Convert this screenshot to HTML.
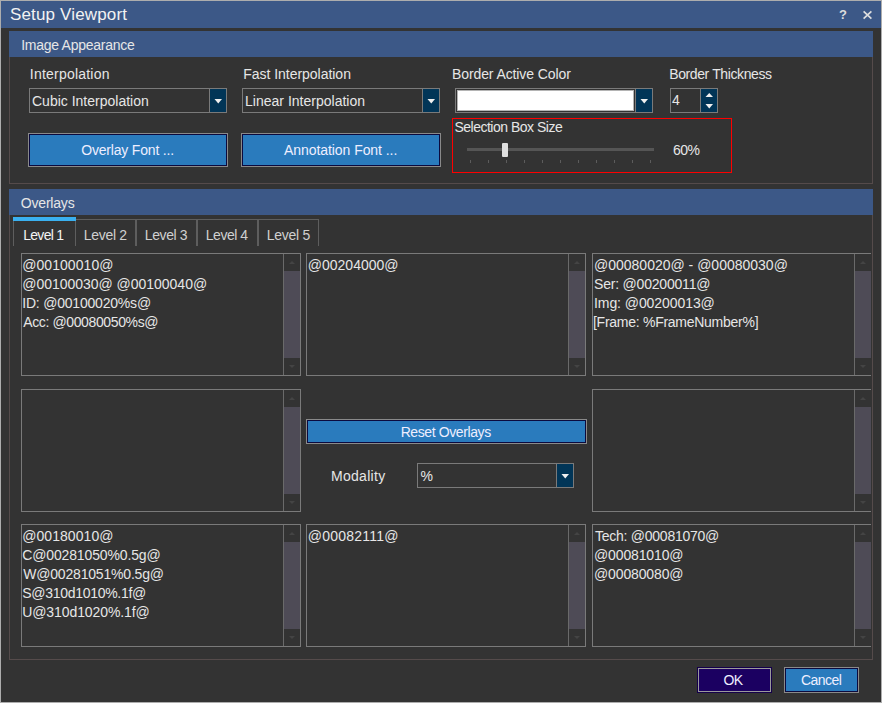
<!DOCTYPE html>
<html><head><meta charset="utf-8">
<style>
*{box-sizing:border-box;margin:0;padding:0}
html,body{width:882px;height:703px;overflow:hidden;background:#333333}
body{position:relative;font-family:"Liberation Sans",sans-serif;font-size:14px;color:#e6e6e6}
.a{position:absolute}
.t{position:absolute;white-space:pre;line-height:19px}
.win{left:0;top:0;width:882px;height:703px;border:1px solid #adadad;background:#333}
.title{left:1px;top:1px;width:880px;height:27px;background:#3c5887}
.hdr{background:#3c5887}
.grp{border:1px solid #554b4b;border-top:none}
.cb{border:1px solid #7a7a7a;background:#333}
.dd{background:#013557;border-left:1px solid #7a7a7a}
.btn{border:1px solid #8a8a8a;background:#0b0a3e}
.btn i{position:absolute;left:1px;top:1px;right:1px;bottom:1px;background:#2a7bbd}
.tb{border:1px solid #7a7a7a;background:#333}
.sb{border-left:1px solid #6a6a6a}
.thumb{background:#4e4b56}
.up{width:0;height:0;border-left:3px solid transparent;border-right:3px solid transparent;border-bottom:3px solid #444444}
.dn{width:0;height:0;border-left:3px solid transparent;border-right:3px solid transparent;border-top:3px solid #444444}
.wup{width:0;height:0;border-left:3.5px solid transparent;border-right:3.5px solid transparent;border-bottom:4px solid #f0f0f0}
.wdn{width:0;height:0;border-left:3.5px solid transparent;border-right:3.5px solid transparent;border-top:4px solid #f0f0f0}
.tab{border:1px solid #5e5e5e;border-bottom:none}
.tick{width:1px;height:3px;background:#5c5c5c}
</style></head><body>
<div class="a win"></div>
<div class="a title"></div>
<div id="t0" class="t" style="left:10.0px;top:5px;font-size:17px;line-height:20px;color:#f2f2f2;letter-spacing:0.154px">Setup Viewport</div>
<div id="t1" class="t" style="left:839px;top:5px;font-size:13px;font-weight:bold;line-height:20px;color:#dcdcdc">?</div>
<svg class="a" style="left:860px;top:8px" width="16" height="14"><path d="M3.6 3.4 L11.4 10.6 M11.4 3.4 L3.6 10.6" stroke="#dedede" stroke-width="1.7" fill="none"/></svg>
<div class="a hdr" style="left:9px;top:31px;width:864px;height:26px"></div>
<div id="t3" class="t" style="left:21.2px;top:36px;;letter-spacing:-0.266px">Image Appearance</div>
<div class="a grp" style="left:9px;top:57px;width:864px;height:127px"></div>
<div id="t4" class="t" style="left:29.8px;top:65px;;letter-spacing:0.218px">Interpolation</div>
<div id="t5" class="t" style="left:243.2px;top:65px;;letter-spacing:-0.026px">Fast Interpolation</div>
<div id="t6" class="t" style="left:452.0px;top:65px;;letter-spacing:-0.101px">Border Active Color</div>
<div id="t7" class="t" style="left:669.2px;top:65px;;letter-spacing:-0.387px">Border Thickness</div>
<div class="a cb" style="left:29px;top:88px;width:198px;height:25px"></div>
<div class="a dd" style="left:209px;top:89px;width:17px;height:23px"></div>
<svg class="a" style="left:214px;top:99px" width="9" height="5"><polygon points="0.5,0 8,0 4.25,4.5" fill="#f0f0f0"/></svg>
<div id="t8" class="t" style="left:32.0px;top:92px;">Cubic Interpolation</div>
<div class="a cb" style="left:242px;top:88px;width:198px;height:25px"></div>
<div class="a dd" style="left:422px;top:89px;width:17px;height:23px"></div>
<svg class="a" style="left:427px;top:99px" width="9" height="5"><polygon points="0.5,0 8,0 4.25,4.5" fill="#f0f0f0"/></svg>
<div id="t9" class="t" style="left:245.0px;top:92px;;letter-spacing:0.010px">Linear Interpolation</div>
<div class="a cb" style="left:455px;top:88px;width:198px;height:25px"></div>
<div class="a dd" style="left:635px;top:89px;width:17px;height:23px"></div>
<svg class="a" style="left:640px;top:99px" width="9" height="5"><polygon points="0.5,0 8,0 4.25,4.5" fill="#f0f0f0"/></svg>
<div class="a" style="left:457px;top:90px;width:177px;height:21px;background:#fff;border:1px solid #b4b4b4"></div>
<div class="a cb" style="left:670px;top:88px;width:48px;height:25px"></div>
<div class="a dd" style="left:700px;top:89px;width:17px;height:23px"></div>
<svg class="a" style="left:705px;top:93px" width="9" height="5"><polygon points="0.5,4 8,4 4.25,0" fill="#f0f0f0"/></svg>
<svg class="a" style="left:705px;top:104px" width="9" height="5"><polygon points="0.5,0 8,0 4.25,4.5" fill="#f0f0f0"/></svg>
<div id="t10" class="t" style="left:672px;top:91px;">4</div>
<div class="a btn" style="left:28px;top:133px;width:200px;height:34px"><i></i></div>
<div id="t11" class="t" style="left:27.6px;top:141px;width:200px;text-align:center;color:#eeeeff;letter-spacing:-0.188px">Overlay Font ...</div>
<div class="a btn" style="left:241px;top:133px;width:200px;height:34px"><i></i></div>
<div id="t12" class="t" style="left:240.6px;top:141px;width:200px;text-align:center;color:#eeeeff;letter-spacing:-0.056px">Annotation Font ...</div>
<div class="a" style="left:452px;top:118px;width:280px;height:55px;border:1px solid #ff0000"></div>
<div id="t13" class="t" style="left:454.4px;top:118px;;letter-spacing:-0.496px">Selection Box Size</div>
<div class="a" style="left:467px;top:148px;width:187px;height:3px;background:#555"></div>
<div class="a tick" style="left:470px;top:160px"></div>
<div class="a tick" style="left:488px;top:160px"></div>
<div class="a tick" style="left:506px;top:160px"></div>
<div class="a tick" style="left:524px;top:160px"></div>
<div class="a tick" style="left:542px;top:160px"></div>
<div class="a tick" style="left:560px;top:160px"></div>
<div class="a tick" style="left:578px;top:160px"></div>
<div class="a tick" style="left:596px;top:160px"></div>
<div class="a tick" style="left:614px;top:160px"></div>
<div class="a tick" style="left:632px;top:160px"></div>
<div class="a tick" style="left:650px;top:160px"></div>
<div class="a" style="left:502px;top:143px;width:6px;height:14px;background:#dedede;border-radius:1px"></div>
<div id="t14" class="t" style="left:673.0px;top:141px;;letter-spacing:-0.500px">60%</div>
<div class="a hdr" style="left:9px;top:189px;width:864px;height:26px"></div>
<div id="t15" class="t" style="left:20.8px;top:194px;;letter-spacing:-0.199px">Overlays</div>
<div class="a grp" style="left:9px;top:215px;width:864px;height:445px"></div>
<div class="a tab" style="left:13px;top:219px;width:63px;height:27px;border-top:none"></div>
<div class="a" style="left:13px;top:217px;width:63px;height:4px;background:#3ab0ef"></div>
<div class="a tab" style="left:76px;top:219px;width:60px;height:27px;border-left:none"></div>
<div class="a tab" style="left:136px;top:219px;width:61px;height:27px"></div>
<div class="a tab" style="left:197px;top:219px;width:61px;height:27px"></div>
<div class="a tab" style="left:258px;top:219px;width:61px;height:27px"></div>
<div id="t16" class="t" style="left:23.2px;top:226px;color:#f4f4f4;letter-spacing:-0.699px">Level 1</div>
<div id="t17" class="t" style="left:83.8px;top:226px;color:#d0d0d0;letter-spacing:-0.299px">Level 2</div>
<div id="t18" class="t" style="left:144.8px;top:226px;color:#d0d0d0;letter-spacing:-0.400px">Level 3</div>
<div id="t19" class="t" style="left:205.8px;top:226px;color:#d0d0d0;letter-spacing:-0.466px">Level 4</div>
<div id="t20" class="t" style="left:266.8px;top:226px;color:#d0d0d0;letter-spacing:-0.266px">Level 5</div>
<div class="a tb" style="left:21px;top:253px;width:280px;height:123px">
<div class="a sb" style="left:261px;top:0;width:17px;height:121px">
<div class="a up" style="left:5px;top:7px"></div>
<div class="a thumb" style="left:0;top:17px;width:16px;height:87px"></div>
<div class="a dn" style="left:5px;top:111px"></div>
</div>
</div>
<div id="t21" class="t" style="left:22.2px;top:256px;;letter-spacing:0.066px">@00100010@</div>
<div id="t22" class="t" style="left:22.2px;top:275px;;letter-spacing:-0.020px">@00100030@ @00100040@</div>
<div id="t23" class="t" style="left:22.2px;top:294px;;letter-spacing:-0.200px">ID: @00100020%s@</div>
<div id="t24" class="t" style="left:23.2px;top:313px;;letter-spacing:-0.375px">Acc: @00080050%s@</div>
<div class="a tb" style="left:306px;top:253px;width:280px;height:123px">
<div class="a sb" style="left:261px;top:0;width:17px;height:121px">
<div class="a up" style="left:5px;top:7px"></div>
<div class="a thumb" style="left:0;top:17px;width:16px;height:87px"></div>
<div class="a dn" style="left:5px;top:111px"></div>
</div>
</div>
<div id="t25" class="t" style="left:307.8px;top:256px;">@00204000@</div>
<div class="a" style="left:10px;top:253px;width:861px;height:123px;overflow:hidden">
<div class="a tb" style="left:582px;top:0px;width:280px;height:123px">
<div class="a sb" style="left:261px;top:0;width:17px;height:121px">
<div class="a up" style="left:5px;top:7px"></div>
<div class="a thumb" style="left:0;top:17px;width:16px;height:87px"></div>
<div class="a dn" style="left:5px;top:111px"></div>
</div>
</div>
</div>
<div id="t26" class="t" style="left:594.0px;top:256px;">@00080020@ - @00080030@</div>
<div id="t27" class="t" style="left:594.0px;top:275px;;letter-spacing:-0.201px">Ser: @00200011@</div>
<div id="t28" class="t" style="left:594.0px;top:294px;;letter-spacing:-0.071px">Img: @00200013@</div>
<div id="t29" class="t" style="left:593.0px;top:313px;;letter-spacing:-0.268px">[Frame: %FrameNumber%]</div>
<div class="a tb" style="left:21px;top:389px;width:280px;height:123px">
<div class="a sb" style="left:261px;top:0;width:17px;height:121px">
<div class="a up" style="left:5px;top:7px"></div>
<div class="a thumb" style="left:0;top:17px;width:16px;height:87px"></div>
<div class="a dn" style="left:5px;top:111px"></div>
</div>
</div>
<div class="a" style="left:10px;top:389px;width:861px;height:123px;overflow:hidden">
<div class="a tb" style="left:582px;top:0px;width:280px;height:123px">
<div class="a sb" style="left:261px;top:0;width:17px;height:121px">
<div class="a up" style="left:5px;top:7px"></div>
<div class="a thumb" style="left:0;top:17px;width:16px;height:87px"></div>
<div class="a dn" style="left:5px;top:111px"></div>
</div>
</div>
</div>
<div class="a tb" style="left:21px;top:524px;width:280px;height:123px">
<div class="a sb" style="left:261px;top:0;width:17px;height:121px">
<div class="a up" style="left:5px;top:7px"></div>
<div class="a thumb" style="left:0;top:17px;width:16px;height:87px"></div>
<div class="a dn" style="left:5px;top:111px"></div>
</div>
</div>
<div id="t30" class="t" style="left:22.2px;top:527px;;letter-spacing:0.066px">@00180010@</div>
<div id="t31" class="t" style="left:22.2px;top:546px;;letter-spacing:-0.133px">C@00281050%0.5g@</div>
<div id="t32" class="t" style="left:23.2px;top:565px;;letter-spacing:-0.187px">W@00281051%0.5g@</div>
<div id="t33" class="t" style="left:22.2px;top:584px;;letter-spacing:-0.286px">S@310d1010%.1f@</div>
<div id="t34" class="t" style="left:22.2px;top:603px;;letter-spacing:-0.086px">U@310d1020%.1f@</div>
<div class="a tb" style="left:306px;top:524px;width:280px;height:123px">
<div class="a sb" style="left:261px;top:0;width:17px;height:121px">
<div class="a up" style="left:5px;top:7px"></div>
<div class="a thumb" style="left:0;top:17px;width:16px;height:87px"></div>
<div class="a dn" style="left:5px;top:111px"></div>
</div>
</div>
<div id="t35" class="t" style="left:307.8px;top:527px;;letter-spacing:0.223px">@00082111@</div>
<div class="a" style="left:10px;top:524px;width:861px;height:123px;overflow:hidden">
<div class="a tb" style="left:582px;top:0px;width:280px;height:123px">
<div class="a sb" style="left:261px;top:0;width:17px;height:121px">
<div class="a up" style="left:5px;top:7px"></div>
<div class="a thumb" style="left:0;top:17px;width:16px;height:87px"></div>
<div class="a dn" style="left:5px;top:111px"></div>
</div>
</div>
</div>
<div id="t36" class="t" style="left:595.0px;top:527px;;letter-spacing:-0.253px">Tech: @00081070@</div>
<div id="t37" class="t" style="left:594.0px;top:546px;;letter-spacing:-0.132px">@00081010@</div>
<div id="t38" class="t" style="left:594.0px;top:565px;;letter-spacing:-0.132px">@00080080@</div>
<div class="a btn" style="left:306px;top:419px;width:281px;height:25px"><i></i></div>
<div id="t39" class="t" style="left:305.2px;top:423px;width:281px;text-align:center;color:#eeeeff;letter-spacing:-0.398px">Reset Overlays</div>
<div id="t40" class="t" style="left:331.0px;top:467px;;letter-spacing:0.286px">Modality</div>
<div class="a cb" style="left:417px;top:463px;width:157px;height:25px"></div>
<div class="a dd" style="left:556px;top:464px;width:17px;height:23px"></div>
<svg class="a" style="left:561px;top:474px" width="9" height="5"><polygon points="0.5,0 8,0 4.25,4.5" fill="#f0f0f0"/></svg>
<div id="t41" class="t" style="left:420.4px;top:467px;;letter-spacing:-4.000px">%</div>
<div class="a" style="left:697px;top:667px;width:75px;height:26px;background:#1b0061;border:1px solid #14004a"><i class="a" style="left:0;top:0;right:0;bottom:0;border:1px solid #9a9a9a"></i></div>
<div id="t42" class="t" style="left:695.6px;top:671px;width:75px;text-align:center;color:#eeeeff;letter-spacing:-0.600px">OK</div>
<div class="a btn" style="left:784px;top:667px;width:75px;height:26px"><i></i></div>
<div id="t43" class="t" style="left:783.6px;top:671px;width:75px;text-align:center;color:#eeeeff;letter-spacing:-0.560px">Cancel</div>
</body></html>
